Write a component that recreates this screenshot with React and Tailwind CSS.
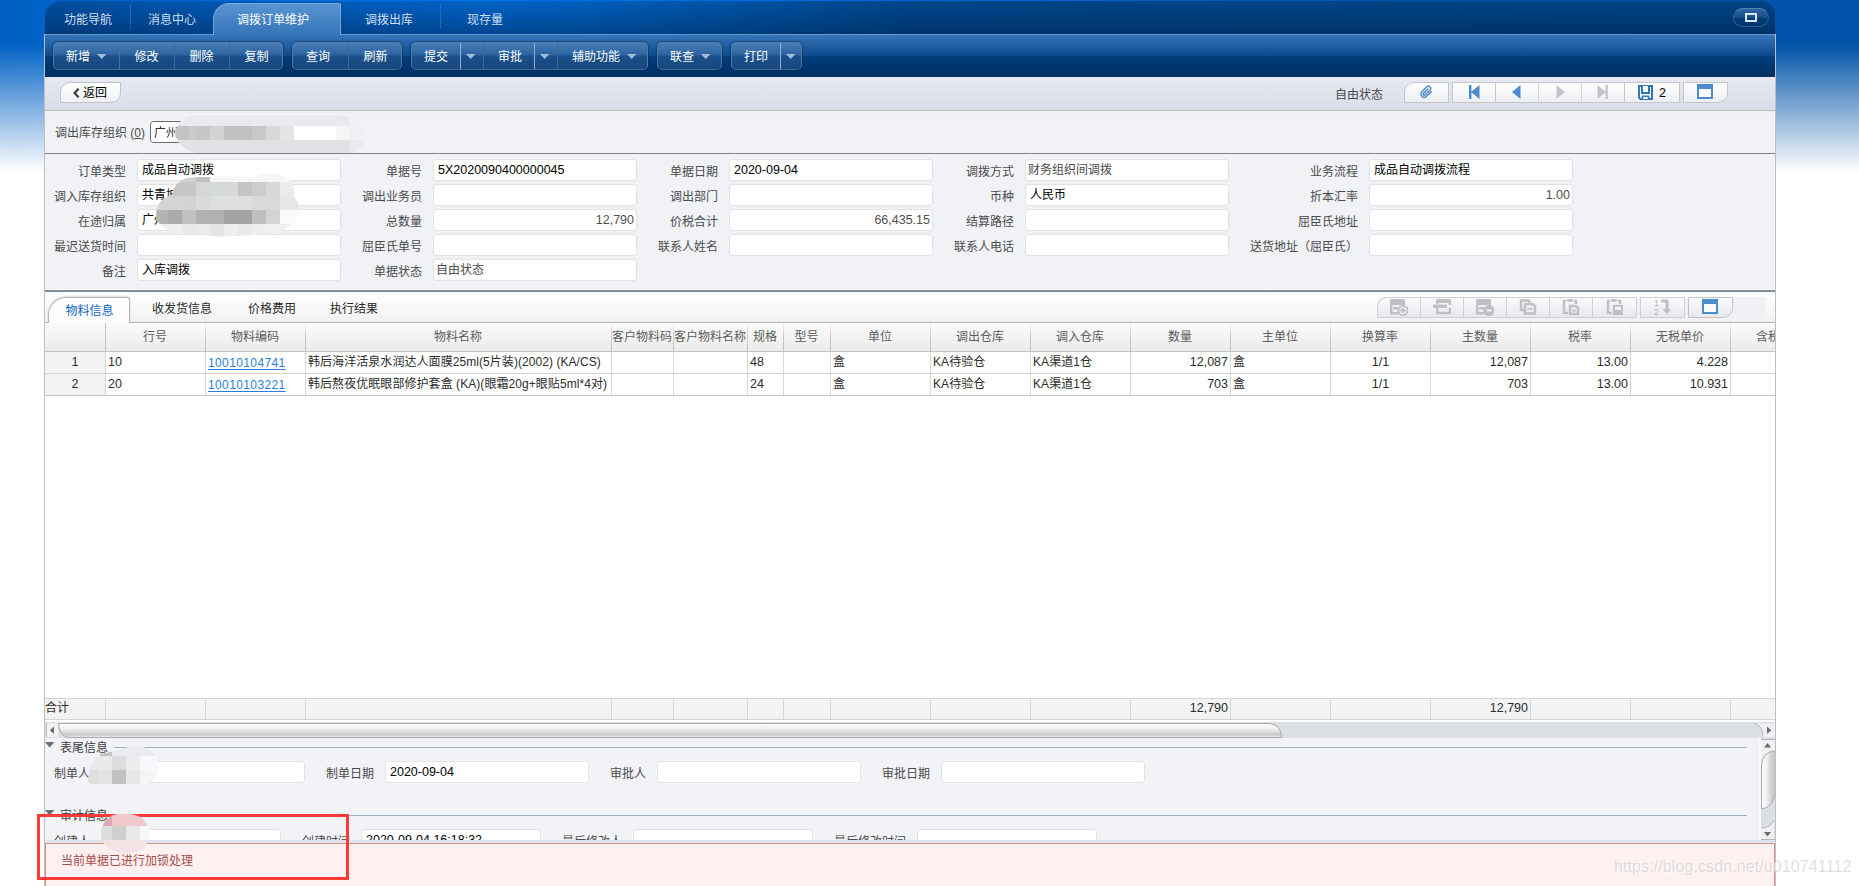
import React from "react";

/* ---------- small building blocks ---------- */

function Caret({ className = "" }) {
  return (
    <svg width="10" height="5" viewBox="0 0 10 5" className={"shrink-0 " + className}>
      <path d="M0 0H9.4L4.7 5Z" fill="#a3bdd8" />
    </svg>
  );
}

function Group({ children, className }) {
  return (
    <div
      className={
        "flex h-[28px] shrink-0 overflow-hidden rounded-[5px] border border-[#4d7cab] border-b-[#3f6a99] bg-[linear-gradient(180deg,#4a7fb6_0%,#2c639f_45%,#1a5089_52%,#17477d_100%)] shadow-[0_0_1px_1px_rgba(0,25,60,0.35)] " +
        className
      }
    >
      {children}
    </div>
  );
}

function Cmd({ label, className = "", caret }) {
  return (
    <div className={"flex shrink-0 items-center pt-px text-white " + className}>
      <span className="shrink-0 whitespace-nowrap">{label}</span>
      {caret && <Caret className="ml-[7px]" />}
    </div>
  );
}

function Field({ label, value, kind = "text", labelClass = "w-[84px]", inputClass = "w-[204px]" }) {
  const tone =
    kind === "num"
      ? "justify-end pr-[2px] text-[12.5px] text-[#4f4f4f]"
      : kind === "muted"
      ? "pl-[2px] text-[#4a4a4a]"
      : kind === "code"
      ? "pl-[4px] text-[12.5px] text-black"
      : "pl-[4px] text-black";
  return (
    <div className="flex h-[22px] shrink-0 items-center">
      <div className={"mr-[11px] shrink-0 whitespace-nowrap pt-[3px] text-right text-[#4a4a4c] " + labelClass}>{label}</div>
      <div
        className={
          "flex h-[22px] shrink-0 items-center overflow-hidden whitespace-nowrap rounded-[3px] border border-[#e3e3e5] bg-white pb-px " +
          tone +
          " " +
          inputClass
        }
      >
        {value}
      </div>
    </div>
  );
}

function FieldColumn({ items, labelClass }) {
  return (
    <div className="flex shrink-0 flex-col gap-[3px]">
      {items.map((it) => (
        <Field key={it[0]} label={it[0]} value={it[1]} kind={it[2]} labelClass={labelClass} />
      ))}
    </div>
  );
}

function NavCell({ children, className }) {
  return <div className={"flex shrink-0 items-center justify-center " + className}>{children}</div>;
}

function WindowIcon() {
  return (
    <svg width="16" height="16" viewBox="0 0 16 16" shapeRendering="crispEdges">
      <rect x="0" y="0" width="16" height="15" rx="1" fill="#4c8ccc" />
      <rect x="2" y="5" width="12" height="8" fill="#fafbfc" />
    </svg>
  );
}

/* ---------- grid data ---------- */

const cols = [
  ["", "w-[61px]", "justify-center bg-[#f3f3f4]"],
  ["行号", "w-[100px]", "pl-[2px]"],
  ["物料编码", "w-[100px]", "pl-[2px]"],
  ["物料名称", "w-[306px]", "pl-[2px]"],
  ["客户物料码", "w-[62px]", "pl-[2px]"],
  ["客户物料名称", "w-[74px]", "pl-[2px]"],
  ["规格", "w-[36px]", "pl-[2px]"],
  ["型号", "w-[47px]", "pl-[2px]"],
  ["单位", "w-[100px]", "pl-[2px]"],
  ["调出仓库", "w-[100px]", "pl-[2px]"],
  ["调入仓库", "w-[100px]", "pl-[2px]"],
  ["数量", "w-[100px]", "justify-end pr-[2px]"],
  ["主单位", "w-[100px]", "pl-[2px]"],
  ["换算率", "w-[100px]", "justify-center"],
  ["主数量", "w-[100px]", "justify-end pr-[2px]"],
  ["税率", "w-[100px]", "justify-end pr-[2px]"],
  ["无税单价", "w-[100px]", "justify-end pr-[2px]"],
  ["含税单价", "w-[100px]", "justify-end pr-[2px]"],
];

const rows = [
  ["1", "10", "10010104741", "韩后海洋活泉水润达人面膜25ml(5片装)(2002) (KA/CS)", "", "", "48", "", "盒", "KA待验仓", "KA渠道1仓", "12,087", "盒", "1/1", "12,087", "13.00", "4.228", ""],
  ["2", "20", "10010103221", "韩后熬夜优眠眼部修护套盒 (KA)(眼霜20g+眼贴5ml*4对)", "", "", "24", "", "盒", "KA待验仓", "KA渠道1仓", "703", "盒", "1/1", "703", "13.00", "10.931", ""],
];

const totals = { 0: "合计", 11: "12,790", 14: "12,790" };

const numeric = /^[\d,./]+$/;

function Grid() {
  return (
    <div className="flex h-[399px] w-[1730px] shrink-0 flex-col overflow-hidden bg-white">
      <div className="flex h-[29px] shrink-0 border-b border-[#c3c3c3] bg-[linear-gradient(180deg,#fbfbfb,#ebebeb)]">
        {cols.map((c, i) => (
          <div key={i} className={"flex shrink-0 " + c[1]}>
            <div className="flex w-0 flex-1 items-center justify-center whitespace-nowrap pr-px text-[#5c5c5c]">{c[0]}</div>
            <div className={i === 0 ? "w-px bg-[#c3c3c3]" : "w-px bg-[linear-gradient(180deg,#f4f4f4,#c8c8c8_50%,#c0c0c0)]"} />
          </div>
        ))}
      </div>
      {rows.map((r, ri) => (
        <div key={ri} className={ri === 0 ? "flex h-[22px] shrink-0 border-b border-[#d6d6d6]" : "flex h-[22px] shrink-0 border-b border-[#c3c3c3]"}>
          {cols.map((c, i) => (
            <div key={i} className={"flex shrink-0 items-center whitespace-nowrap border-r border-[#d6d6d6] pb-px text-[#2c2c2c] " + c[1] + " " + c[2]}>
              {i === 2 ? (
                <span className="pt-px tracking-[0.38px] text-[#2b7fd9] underline underline-offset-[2px]">{r[i]}</span>
              ) : (
                <span className={numeric.test(r[i]) ? "text-[12.5px]" : "tracking-[0.06px]"}>{r[i]}</span>
              )}
            </div>
          ))}
        </div>
      ))}
      <div className="flex-1" />
      <div className="mb-[2px] flex h-[22px] shrink-0 border-y border-[#d4d4d4] bg-[#f3f3f3]">
        {cols.map((c, i) => (
          <div
            key={i}
            className={
              "flex shrink-0 items-center whitespace-nowrap border-r border-[#d6d6d6] pb-[2px] text-[#2c2c2c] " +
              c[1] +
              (i === 0 ? " text-[12px]" : " justify-end pr-[2px] text-[12.5px]")
            }
          >
            {totals[i]}
          </div>
        ))}
      </div>
    </div>
  );
}

/* ---------- row-editing icons ---------- */

function RowIcon({ kind }) {
  const s = { fill: "none", stroke: "#bfc0c3", strokeWidth: 2.4 };
  const g = "#bfc0c3";
  return (
    <svg width="18" height="17" viewBox="0 0 18 17">
      {(kind === "add" || kind === "del") && (
        <>
          <path d="M0 1.5Q0 0 1.5 0H13.5Q15 0 15 1.5V6H0Z" fill={g} />
          <path d="M1.2 4V14.3H8M13.8 4V7M3 9.3H8" {...s} />
          <circle cx="13" cy="11.5" r="4.6" fill={kind === "del" ? g : "#edeef1"} stroke={g} strokeWidth="1.8" />
          <path d={kind === "add" ? "M10.4 11.5H15.6M13 8.9V14.1" : "M10.4 11.5H15.6"} fill="none" stroke={kind === "add" ? g : "#f4f5f7"} strokeWidth="1.8" />
        </>
      )}
      {kind === "insert" && (
        <>
          <path d="M3 1.5Q3 0 4.5 0H16.5Q18 0 18 1.5V4H3Z" fill={g} />
          <path d="M0 5.5H14V9H0Z" fill={g} />
          <path d="M4.2 2V5M16.8 2V6M16.8 9V14H4.2V8.5" {...s} />
        </>
      )}
      {kind === "copy" && (
        <>
          <path d="M6 11H2V1.5H9.5L11 3.5" {...s} />
          <path d="M6 5H13.5L16 7.5V14.5H6Z" {...s} />
          <path d="M8.5 9.8H13.5" {...s} strokeWidth="1.8" />
        </>
      )}
      {(kind === "paste" || kind === "pasteEnd") && (
        <>
          <path d="M4 2H2V14H6M12 2H14V5M5 1.4H11" {...s} />
          <path d="M7 0H9V3H7Z" fill={g} />
          {kind === "paste" ? (
            <>
              <path d="M8 7H14L16 9V15H8Z" {...s} />
              <path d="M10 11.5H14" {...s} strokeWidth="1.8" />
            </>
          ) : (
            <>
              <path d="M8 6.8H16V15H8Z" {...s} strokeWidth="2" />
              <path d="M8 11H16V15H8Z" fill={g} />
            </>
          )}
        </>
      )}
    </svg>
  );
}

function SortIcon() {
  return (
    <svg width="18" height="17" viewBox="0 0 18 17">
      <text x="0" y="7" fontSize="8.5" fontFamily="Liberation Sans, Arial, sans-serif" fill="#b4b5b8">1</text>
      <text x="0" y="15.5" fontSize="8.5" fontFamily="Liberation Sans, Arial, sans-serif" fill="#b4b5b8">2</text>
      <path d="M7 2H13V11" fill="none" stroke="#bfc0c3" strokeWidth="3" />
      <path d="M8.8 10H17.2L13 15.5Z" fill="#bfc0c3" />
    </svg>
  );
}

/* ---------- redaction mosaics ---------- */

function Mosaic({ id, className, w, h, path, base, cells }) {
  return (
    <svg width={w} height={h} viewBox={`0 0 ${w} ${h}`} className={"absolute " + className}>
      <clipPath id={id}>
        <path d={path} />
      </clipPath>
      <g clipPath={`url(#${id})`} shapeRendering="crispEdges">
        <rect width={w} height={h} fill={base} />
        {cells.map((c, i) => (
          <rect key={i} x={c[0]} y={c[1]} width={c[2]} height={c[3]} fill={c[4]} />
        ))}
      </g>
    </svg>
  );
}

const orgCells = [
  [0, 12, 14, 14, "#c3c3c3"], [14, 12, 7, 14, "#cbcbcb"], [21, 12, 14, 14, "#c7c7c7"], [35, 12, 14, 14, "#d3d3d4"],
  [49, 12, 28, 14, "#c1c1c1"], [77, 12, 14, 14, "#c8c8c8"], [91, 12, 14, 14, "#d8d8d8"], [105, 12, 14, 14, "#e4e4e6"],
  [119, 12, 42, 14, "#ffffff"], [161, 12, 14, 14, "#f5f5f6"], [175, 12, 20, 14, "#eff0f4"], [175, 0, 20, 12, "#f0f1f5"],
  [0, 26, 175, 14, "#e1e2e5"], [175, 26, 20, 14, "#e9eaee"],
];

const formCells = [
  [0, 0, 140, 9, "#f5f6f8"], [10, 3, 31, 6, "#d0d0d0"], [41, 3, 14, 6, "#c0c0c0"],
  [10, 9, 31, 14, "#c6c6c6"], [41, 9, 14, 14, "#d7d7d7"], [55, 9, 14, 14, "#d5d9d8"], [69, 9, 14, 14, "#d8d8d8"],
  [83, 9, 14, 14, "#c4c4c4"], [97, 9, 14, 14, "#cdcdcd"], [111, 9, 14, 14, "#d8d8d8"], [125, 9, 20, 14, "#ebebeb"],
  [0, 23, 27, 14, "#d4d4d4"], [27, 23, 14, 14, "#d3d3d3"], [41, 23, 14, 14, "#dadada"], [55, 23, 42, 14, "#dedfe0"],
  [97, 23, 28, 14, "#d9d9da"], [125, 23, 20, 14, "#e6e7e9"],
  [0, 37, 13, 14, "#b3b3b3"], [13, 37, 14, 14, "#aaaaaa"], [27, 37, 14, 14, "#c0c0c0"], [41, 37, 28, 14, "#b1b1b1"],
  [69, 37, 28, 14, "#a3a3a3"], [97, 37, 14, 14, "#bfbfbf"], [111, 37, 14, 14, "#d4d4d4"], [125, 37, 20, 14, "#fbfbfb"],
  [27, 51, 14, 14, "#e9e9ea"], [41, 51, 14, 14, "#ebebec"], [55, 51, 14, 14, "#e4e4e4"], [83, 51, 14, 14, "#e9e9ea"], [111, 51, 14, 14, "#f1f1f1"],
];

const makerCells = [
  [12, 7, 12, 4, "#c2c3c5"],
  [10, 11, 14, 14, "#e9e9ea"], [24, 11, 14, 14, "#dcdcdf"], [38, 11, 14, 14, "#ececee"], [52, 11, 18, 14, "#f8f9fc"],
  [0, 25, 10, 14, "#dedede"], [10, 25, 14, 14, "#e3e3e3"], [24, 25, 14, 14, "#c1c3c2"], [38, 25, 14, 14, "#e7e7e7"], [52, 25, 18, 14, "#f5f5f6"],
];

const creatorCells = [
  [0, 0, 11, 12, "#dca9ae"], [11, 0, 37, 12, "#f1c8cc"],
  [0, 12, 11, 14, "#dddde0"], [11, 12, 14, 14, "#cfcfcf"], [25, 12, 14, 14, "#e8e8e9"], [39, 12, 10, 14, "#f8f8fa"],
];

/* ---------- footer sections ---------- */

function SectionTitle({ text }) {
  return (
    <div className="flex h-[19px] shrink-0 items-center">
      <svg width="10" height="6" viewBox="0 0 10 6" className="mb-[5px]">
        <path d="M0 0H9.4L4.7 5.5Z" fill="#6e6e70" />
      </svg>
      <div className="ml-[5px] w-[49px] whitespace-nowrap text-[#3c3c3e]">{text}</div>
      <div className="ml-[5px] h-px w-[1633px] bg-[#9fafc0]" />
    </div>
  );
}

function VScroll() {
  return (
    <svg width="16" height="102" viewBox="0 0 16 102">
      <defs>
        <linearGradient id="vthumb" x1="0" x2="1" y1="0" y2="0">
          <stop offset="0" stopColor="#ffffff" />
          <stop offset="0.35" stopColor="#f3f3f4" />
          <stop offset="0.85" stopColor="#c6c7c9" />
          <stop offset="1" stopColor="#e6e6e8" />
        </linearGradient>
      </defs>
      <rect width="16" height="102" fill="#dcdfe4" />
      <rect width="2" height="102" fill="#fbfbfc" />
      <path d="M2 1H16V14H12Q6 15 2 22Z" fill="#f0f0f2" />
      <path d="M2 1.5H16" stroke="#b5b7bb" />
      <path d="M2.5 71V27Q4 13.5 16 13V54Q15 69.5 2.5 71Z" fill="url(#vthumb)" stroke="#a9abaf" />
      <path d="M2 90Q12 90 15 82V101H2Z" fill="#f0f0f2" />
      <path d="M2 90Q12 90 15 82" fill="none" stroke="#b5b7bb" />
      <path d="M2 101.5H16" stroke="#b5b7bb" />
      <path d="M5 9.5H12L8.5 5Z" fill="#6a6a6c" />
      <path d="M5 94H12L8.5 98.5Z" fill="#6a6a6c" />
    </svg>
  );
}

function HScroll() {
  return (
    <svg width="1730" height="16" viewBox="0 0 1730 16" className="block shrink-0">
      <defs>
        <linearGradient id="hthumb" x1="0" x2="0" y1="0" y2="1">
          <stop offset="0" stopColor="#ffffff" />
          <stop offset="0.35" stopColor="#f0f1f1" />
          <stop offset="0.8" stopColor="#c6c8ca" />
          <stop offset="1" stopColor="#f2f2f3" />
        </linearGradient>
      </defs>
      <rect width="1730" height="16" fill="#dcdfe4" />
      <path d="M2 1.5H13V15H2Z" fill="#f3f3f4" />
      <path d="M1.5 1V15" stroke="#b8babd" />
      <path d="M13.5 1.5H1224Q1236 2 1236.5 15.5H24Q14 14 13.5 1.5Z" fill="url(#hthumb)" stroke="#a6a9ad" />
      <path d="M9 4.5V12L4.8 8.2Z" fill="#6a6a6c" />
      <path d="M1710 1.5H1730V15H1718Q1718 4 1710 1.5Z" fill="#f0f0f2" />
      <path d="M1710 1.5Q1718 4 1718 15" fill="none" stroke="#b5b7bb" />
      <path d="M1722 4.5V12L1726.2 8.2Z" fill="#6a6a6c" />
    </svg>
  );
}

/* ---------- page ---------- */

export default function App() {
  return (
    <div className="relative h-[886px] w-[1859px] overflow-hidden bg-white font-['Liberation_Sans','Noto_Sans_CJK_SC',Arial,sans-serif] text-[12px] leading-[16px]">
      <div className="absolute left-0 top-0 h-[174px] w-[1859px] bg-[linear-gradient(180deg,rgba(255,255,255,0)_0px,rgba(255,255,255,0)_44px,#ffffff_172px),linear-gradient(90deg,#0060c2_0%,#0074f0_25%,#0066d2_50%,#0053a8_80%)]" />

      <div className="relative ml-[44px] flex h-[886px] w-[1732px] flex-col pt-px">
        {/* tab strip */}
        <div className="ml-px flex h-[33px] w-[1730px] shrink-0 rounded-tl-[16px] rounded-tr-[14px] bg-[linear-gradient(180deg,rgba(0,0,0,0)_0%,rgba(0,20,50,0.35)_100%),linear-gradient(90deg,#004e9f_0%,#0058b4_10%,#0062c6_25%,#0060c0_30%,#00468c_50%,#004384_100%)] text-[#cfdff0]">
          <div className="flex w-[85px] items-center justify-center pl-px pt-[4px]">功能导航</div>
          <div className="mt-[4px] h-[23px] border-l border-dotted border-[#4b82bd]" />
          <div className="flex w-[82px] items-center pl-[17px] pt-[4px]">消息中心</div>
          <div className="relative mt-[2px] flex h-[32px] w-[128px] items-center justify-center rounded-tl-[16px] rounded-tr-[2px] border border-b-0 border-[#78a8da] bg-[linear-gradient(180deg,#5a94d2,#3474b8)] pr-[8px] text-white">
            调拨订单维护
          </div>
          <div className="flex w-[99px] items-center pl-[24px] pt-[4px]">调拨出库</div>
          <div className="mt-[4px] h-[23px] border-l border-dotted border-[#4b82bd]" />
          <div className="flex flex-1 items-center pl-[26px] pt-[4px]">现存量</div>
          <div className="mr-[6px] mt-[7px] flex h-[19px] w-[36px] items-center justify-center rounded-full border border-[#2a5f97] border-t-[#5485b8] bg-[linear-gradient(180deg,#2e679f_0%,#174f8b_50%,#003c78_52%,#00356c_100%)]">
            <div className="h-[9px] w-[12px] border-2 border-[#dbe8f5]" />
          </div>
        </div>

        <div className="flex min-h-0 flex-1 flex-col border-x border-[#bcbfc4]">
          {/* command bar */}
          <div className="flex h-[43px] shrink-0 items-start border-t border-[#6396cd] bg-[linear-gradient(180deg,#3675b8_0%,#0d4a8d_49%,#003d7c_52%,#002f62_100%)] pl-[8px] pt-[7px]">
            <Group className="w-[230px]">
              <Cmd label="新增" caret className="w-[66px] border-r border-[#4273a5] pl-[12px]" />
              <Cmd label="修改" className="w-[55px] justify-center border-r border-[#3a6a9c] pr-px" />
              <Cmd label="删除" className="w-[55px] justify-center border-r border-[#3a6a9c] pr-px" />
              <Cmd label="复制" className="w-[53px] justify-center" />
            </Group>
            <Group className="ml-[9px] w-[110px]">
              <Cmd label="查询" className="w-[56px] border-r border-[#3a6a9c] pl-[13px]" />
              <Cmd label="刷新" className="w-[53px] justify-center" />
            </Group>
            <Group className="ml-[9px] w-[237px]">
              <Cmd label="提交" className="w-[49px] border-r border-[#8fb0d0] pl-[12px]" />
              <div className="flex w-[23px] items-center justify-center border-r border-[#3a6a9c] pr-[3px] pt-px"><Caret className="ml-px" /></div>
              <Cmd label="审批" className="w-[51px] border-r border-[#8fb0d0] pl-[14px]" />
              <div className="flex w-[23px] items-center justify-center border-r border-[#3a6a9c] pr-[3px] pt-px"><Caret className="ml-px" /></div>
              <Cmd label="辅助功能" caret className="pl-[14px]" />
            </Group>
            <Group className="ml-[9px] w-[65px]">
              <Cmd label="联查" caret className="pl-[12px]" />
            </Group>
            <Group className="ml-[9px] w-[71px]">
              <Cmd label="打印" className="w-[49px] border-r border-[#8fb0d0] pl-[12px]" />
              <div className="flex w-[20px] items-center justify-center pt-px"><Caret /></div>
            </Group>
          </div>

          {/* status and record navigation */}
          <div className="flex h-[34px] shrink-0 items-start border-b border-[#bfc0c2] bg-[linear-gradient(180deg,#e6eaf2,#d8dde7)] pt-[5px]">
            <div className="ml-[15px] flex h-[21px] w-[61px] items-center rounded-br-[10px] rounded-tl-[10px] border border-[#c2c3c5] bg-[linear-gradient(180deg,#ffffff,#eff0f2)] pl-[12px] text-black">
              <svg width="7" height="10" viewBox="0 0 7 10" className="mr-[3px]">
                <path d="M5.6 0.8L1.6 5L5.6 9.2" fill="none" stroke="#3d3d3f" strokeWidth="2.2" />
              </svg>
              返回
            </div>
            <div className="flex-1" />
            <div className="mr-[21px] pt-[5px] text-[#4a4a4c]">自由状态</div>
            <div className="flex h-[21px] w-[45px] items-center justify-center rounded-tl-[10px] border border-[#c6c7c9] bg-[linear-gradient(180deg,#ffffff,#eceef1)] pb-px">
              <svg width="13" height="14" viewBox="0 0 24 24" fill="none" stroke="#4a89c9" strokeWidth="2.6" strokeLinecap="round">
                <path d="M21 11l-9 9a6 6 0 0 1-8.5-8.5l9-9a4 4 0 0 1 6 5.7l-9 9a2 2 0 0 1-3-2.8l8-8" />
              </svg>
            </div>
            <div className="ml-[3px] flex h-[21px] w-[228px] border border-[#c6c7c9] bg-[linear-gradient(180deg,#ffffff,#eceef1)]">
              <NavCell className="w-[43px] border-r border-[#c6c7c9] pb-px">
                <svg width="11" height="14" viewBox="0 0 11 14"><path d="M0 0H2.4V14H0ZM10.5 0V14L2 7Z" fill="#4c8ccc" /></svg>
              </NavCell>
              <NavCell className="w-[43px] border-r border-[#d2d3d5] pb-px pr-px">
                <svg width="9" height="14" viewBox="0 0 9 14"><path d="M8.5 0V14L0 7Z" fill="#4c8ccc" /></svg>
              </NavCell>
              <NavCell className="w-[43px] border-r border-[#d2d3d5] pb-px">
                <svg width="9" height="14" viewBox="0 0 9 14"><path d="M0.5 0V14L9 7Z" fill="#c4c5c8" /></svg>
              </NavCell>
              <NavCell className="w-[43px] border-r border-[#c6c7c9] pb-px pr-px">
                <svg width="11" height="14" viewBox="0 0 11 14"><path d="M8.4 0H10.8V14H8.4ZM0.5 0V14L9 7Z" fill="#c4c5c8" /></svg>
              </NavCell>
              <NavCell className="w-[54px]">
                <svg width="15" height="15" viewBox="0 0 15 15">
                  <path d="M1 1H14V14H2.5L1 12.5Z" fill="#fff" stroke="#3576b8" strokeWidth="2" />
                  <path d="M4 1V8H11V1" fill="#fff" stroke="#3576b8" strokeWidth="2" />
                  <path d="M4.5 14V11.2H10.5V14" fill="#fff" stroke="#3576b8" strokeWidth="1.6" />
                </svg>
                <span className="ml-[6px] text-[12.5px] text-black">2</span>
              </NavCell>
            </div>
            <div className="ml-[3px] mr-[47px] flex h-[21px] w-[45px] items-center justify-center rounded-br-[10px] border border-[#c6c7c9] bg-[linear-gradient(180deg,#ffffff,#eceef1)] pb-px pr-px">
              <WindowIcon />
            </div>
          </div>

          {/* organisation row */}
          <div className="flex h-[43px] shrink-0 items-center border-b border-[#7e8288] bg-[linear-gradient(180deg,#eeeeee_0px,#eeeeee_2px,#f1f2f6_2px)] pl-[10px]">
            <div className="w-[95px] whitespace-nowrap pt-[2px] text-[#4a4a4c]">
              调出库存组织 <span>(</span><span className="underline">0</span><span>)</span>
            </div>
            <div className="flex h-[22px] w-[204px] items-center overflow-hidden rounded-[3px] border border-[#6c6c70] bg-white pl-[3px] pt-px text-[#333] [mask-image:linear-gradient(90deg,#000_130px,transparent_131px)]">广州</div>
          </div>

          {/* header form */}
          <div className="flex h-[138px] shrink-0 items-start border-b-2 border-[#7f8c99] bg-[#f1f2f6] pt-[5px] shadow-[inset_0_-1px_0_#fff]">
            <FieldColumn
              labelClass="w-[81px]"
              items={[["订单类型", "成品自动调拨"], ["调入库存组织", "共青城"], ["在途归属", "广州"], ["最迟送货时间", ""], ["备注", "入库调拨"]]}
            />
            <FieldColumn
              labelClass="w-[81px]"
              items={[["单据号", "5X2020090400000045", "code"], ["调出业务员", ""], ["总数量", "12,790", "num"], ["屈臣氏单号", ""], ["单据状态", "自由状态", "muted"]]}
            />
            <FieldColumn
              labelClass="w-[81px]"
              items={[["单据日期", "2020-09-04", "code"], ["调出部门", ""], ["价税合计", "66,435.15", "num"], ["联系人姓名", ""]]}
            />
            <FieldColumn
              labelClass="w-[81px]"
              items={[["调拨方式", "财务组织间调拨", "muted"], ["币种", "人民币"], ["结算路径", ""], ["联系人电话", ""]]}
            />
            <FieldColumn
              labelClass="w-[129px]"
              items={[["业务流程", "成品自动调拨流程"], ["折本汇率", "1.00", "num"], ["屈臣氏地址", ""], ["送货地址（屈臣氏）", ""]]}
            />
          </div>

          {/* detail tabs */}
          <div className="flex h-[31px] shrink-0 items-end border-b border-[#b4b4b4] bg-[linear-gradient(180deg,#ffffff_10%,#f1f1f1)] text-[#2a2a2a]">
            <div className="relative -mb-px ml-[3px] flex h-[26px] w-[82px] items-center justify-center rounded-tl-[18px] rounded-tr-[3px] border border-b-0 border-[#b4b4b4] bg-[linear-gradient(180deg,#ffffff,#fbfbfb)] pl-px text-[#0d68bd] shadow-[0_-1px_2px_rgba(0,0,0,0.15)]">
              物料信息
            </div>
            <div className="ml-[22px] w-[96px] pb-[5px]">收发货信息</div>
            <div className="w-[82px] pb-[5px]">价格费用</div>
            <div className="flex-1 pb-[5px]">执行结果</div>
            <div className="mb-[3px] mr-[10px] flex h-[22px] items-start bg-[#f0f1f5]">
              <div className="flex h-[21px] w-[260px] rounded-tl-[10px] border border-[#cfd0d2] bg-[linear-gradient(180deg,#f9fafb,#e6e8ec)]">
                <NavCell className="w-[43px] border-r border-[#cfd0d2]"><RowIcon kind="add" /></NavCell>
                <NavCell className="w-[43px] border-r border-[#cfd0d2]"><RowIcon kind="insert" /></NavCell>
                <NavCell className="w-[43px] border-r border-[#cfd0d2]"><RowIcon kind="del" /></NavCell>
                <NavCell className="w-[43px] border-r border-[#cfd0d2]"><RowIcon kind="copy" /></NavCell>
                <NavCell className="w-[43px] border-r border-[#cfd0d2]"><RowIcon kind="paste" /></NavCell>
                <NavCell className="w-[43px]"><RowIcon kind="pasteEnd" /></NavCell>
              </div>
              <NavCell className="ml-[3px] h-[21px] w-[45px] border border-[#cfd0d2] bg-[linear-gradient(180deg,#f9fafb,#e6e8ec)]"><SortIcon /></NavCell>
              <NavCell className="ml-[3px] mr-[32px] h-[21px] w-[45px] rounded-br-[10px] border border-[#c3c4c6] bg-[linear-gradient(180deg,#fbfcfd,#e6e8ec)] pb-px pr-px"><WindowIcon /></NavCell>
            </div>
          </div>

          <Grid />

          {/* horizontal scroll */}
          <div className="h-[16px] shrink-0">
            <HScroll />
          </div>

          {/* tail form */}
          <div className="flex h-[102px] shrink-0 overflow-hidden bg-[#f1f3f7]">
            <div className="flex h-[102px] w-[1714px] flex-col overflow-hidden">
              <SectionTitle text="表尾信息" />
              <div className="mt-[4px] flex shrink-0 pl-[9px]">
                <Field label="制单人" labelClass="w-[36px]" value="" />
                <Field label="制单日期" kind="code" labelClass="w-[69px]" value="2020-09-04" />
                <Field label="审批人" labelClass="w-[57px]" value="" />
                <Field label="审批日期" labelClass="w-[69px]" value="" />
              </div>
              <div className="h-[23px] shrink-0" />
              <SectionTitle text="审计信息" />
              <div className="mt-[4px] flex shrink-0 pl-[9px]">
                <Field label="创建人" labelClass="w-[36px]" inputClass="w-[180px]" value="" />
                <Field label="创建时间" kind="code" labelClass="w-[69px]" inputClass="w-[180px]" value="2020-09-04 16:18:32" />
                <Field label="最后修改人" labelClass="w-[81px]" inputClass="w-[180px]" value="" />
                <Field label="最后修改时间" labelClass="w-[93px]" inputClass="w-[180px]" value="" />
              </div>
            </div>
            <VScroll />
          </div>
          <div className="h-[3px] shrink-0 bg-[#dde5f0]" />

          {/* message strip */}
          <div className="flex min-h-0 flex-1 items-start border-x border-t border-[#e09482] bg-[#fff1f1] pl-[15px] pt-[9px] text-[#a94a4a]">
            当前单据已进行加锁处理
          </div>
        </div>
      </div>

      {/* annotation frame, mosaics and watermark lie over the window */}
      <div className="absolute left-[37px] top-[814px] h-[66px] w-[312px] border-[3px] border-[#ff3838]" />
      <Mosaic id="m1" className="left-[175px] top-[114px]" w={191} h={40} base="#e9eaed" cells={orgCells}
        path="M0 19Q4 3 18 1H160Q176 1 183 8Q186 14 190 25Q186 38 176 39H22Q5 36 0 19Z" />
      <Mosaic id="m2" className="left-[155px] top-[173px]" w={145} h={64} base="#efeff1" cells={formCells}
        path="M17 22Q20 8 32 5Q50 3 100 4Q118 -2 128 3Q141 8 139 24Q147 34 143 42Q138 56 118 60Q70 66 40 61Q6 60 2 46Q-2 28 17 22Z" />
      <Mosaic id="m3" className="left-[88px] top-[745px]" w={70} h={39} base="#e8ecf2" cells={makerCells}
        path="M0 36Q2 16 12 9Q30 6 40 2Q50 -2 60 4Q70 10 70 20Q70 34 58 39H2Z" />
      <Mosaic id="m4" className="left-[85px] top-[814px] ml-[16px]" w={49} h={39} base="#f2e3e5" cells={creatorCells}
        path="M0 22Q0 8 10 2Q24 -3 39 3Q48 8 48 22Q46 39 26 39Q3 39 0 22Z" />
      <div className="absolute left-[1614px] top-[857px] whitespace-nowrap text-[16px] leading-[20px] tracking-[0.1px] text-[rgba(190,190,190,0.5)] [text-shadow:1px_1px_0_rgba(255,255,255,0.8)]">
        https://blog.csdn.net/u010741112
      </div>
    </div>
  );
}
